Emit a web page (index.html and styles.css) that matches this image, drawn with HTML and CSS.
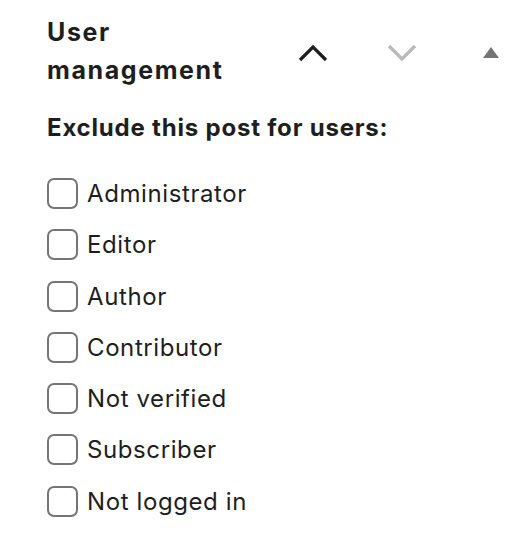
FILE: index.html
```html
<!DOCTYPE html>
<html lang="en">
<head>
    <meta charset="UTF-8">
    <meta name="viewport" content="width=device-width, initial-scale=1.0">
    <title>User management</title>
    <link rel="stylesheet" href="styles.css">
</head>
<body>

<div class="panel">
    <div class="panel-header">
        <h2 class="panel-title">User management</h2>
        <div class="panel-actions">
            <button class="icon-btn" aria-label="Move up">
                <svg width="30" height="18" viewBox="0 0 30 18">
                    <path d="M2 16 L15 3 L28 16" fill="none" stroke="#1e1e1e" stroke-width="3.2"/>
                </svg>
            </button>
            <button class="icon-btn" aria-label="Move down">
                <svg width="30" height="18" viewBox="0 0 30 18">
                    <path d="M2 2 L15 15 L28 2" fill="none" stroke="#b8b8b8" stroke-width="3.2"/>
                </svg>
            </button>
            <button class="icon-btn" aria-label="Toggle panel">
                <svg width="16" height="11" viewBox="0 0 16 11">
                    <path d="M0 11 L8 0 L16 11 Z" fill="#757575"/>
                </svg>
            </button>
        </div>
    </div>

    <p class="field-label">Exclude this post for users:</p>

    <ul class="role-list">
        <li><label><input type="checkbox"><span>Administrator</span></label></li>
        <li><label><input type="checkbox"><span>Editor</span></label></li>
        <li><label><input type="checkbox"><span>Author</span></label></li>
        <li><label><input type="checkbox"><span>Contributor</span></label></li>
        <li><label><input type="checkbox"><span>Not verified</span></label></li>
        <li><label><input type="checkbox"><span>Subscriber</span></label></li>
        <li><label><input type="checkbox"><span>Not logged in</span></label></li>
    </ul>
</div>

</body>
</html>
```

FILE: styles.css
```css
* {
    box-sizing: border-box;
    margin: 0;
    padding: 0;
    font-family: Inter, "Noto Sans", sans-serif;
}

body {
    background-color: #fff;
    color: #1e1e1e;
}

.panel {
    padding: 13px 0 0 47px;
}

.panel-header {
    display: flex;
    align-items: center;
}

.panel-title {
    flex: 1;
    max-width: 215px;
    font-size: 25px;
    font-weight: 700;
    line-height: 38px;
    letter-spacing: 1.6px;
}

.panel-actions {
    display: flex;
    gap: 17px;
    margin-left: auto;
    padding-top: 3px;
}

.icon-btn {
    width: 72px;
    height: 48px;
    border: none;
    background: none;
    display: flex;
    align-items: center;
    justify-content: center;
    cursor: pointer;
}

.field-label {
    font-size: 24px;
    font-weight: 700;
    line-height: 30px;
    letter-spacing: 0.8px;
    margin-top: 24px;
}

.role-list {
    list-style: none;
    margin-top: 35px;
}

.role-list li {
    height: 51.3px;
}

.role-list label {
    display: flex;
    align-items: center;
    gap: 9px;
    font-size: 24px;
    line-height: 31px;
    letter-spacing: 0.6px;
}

.role-list input {
    appearance: none;
    width: 31px;
    height: 31px;
    border: 2px solid #757575;
    border-radius: 7px;
    background: #fff;
}
```
